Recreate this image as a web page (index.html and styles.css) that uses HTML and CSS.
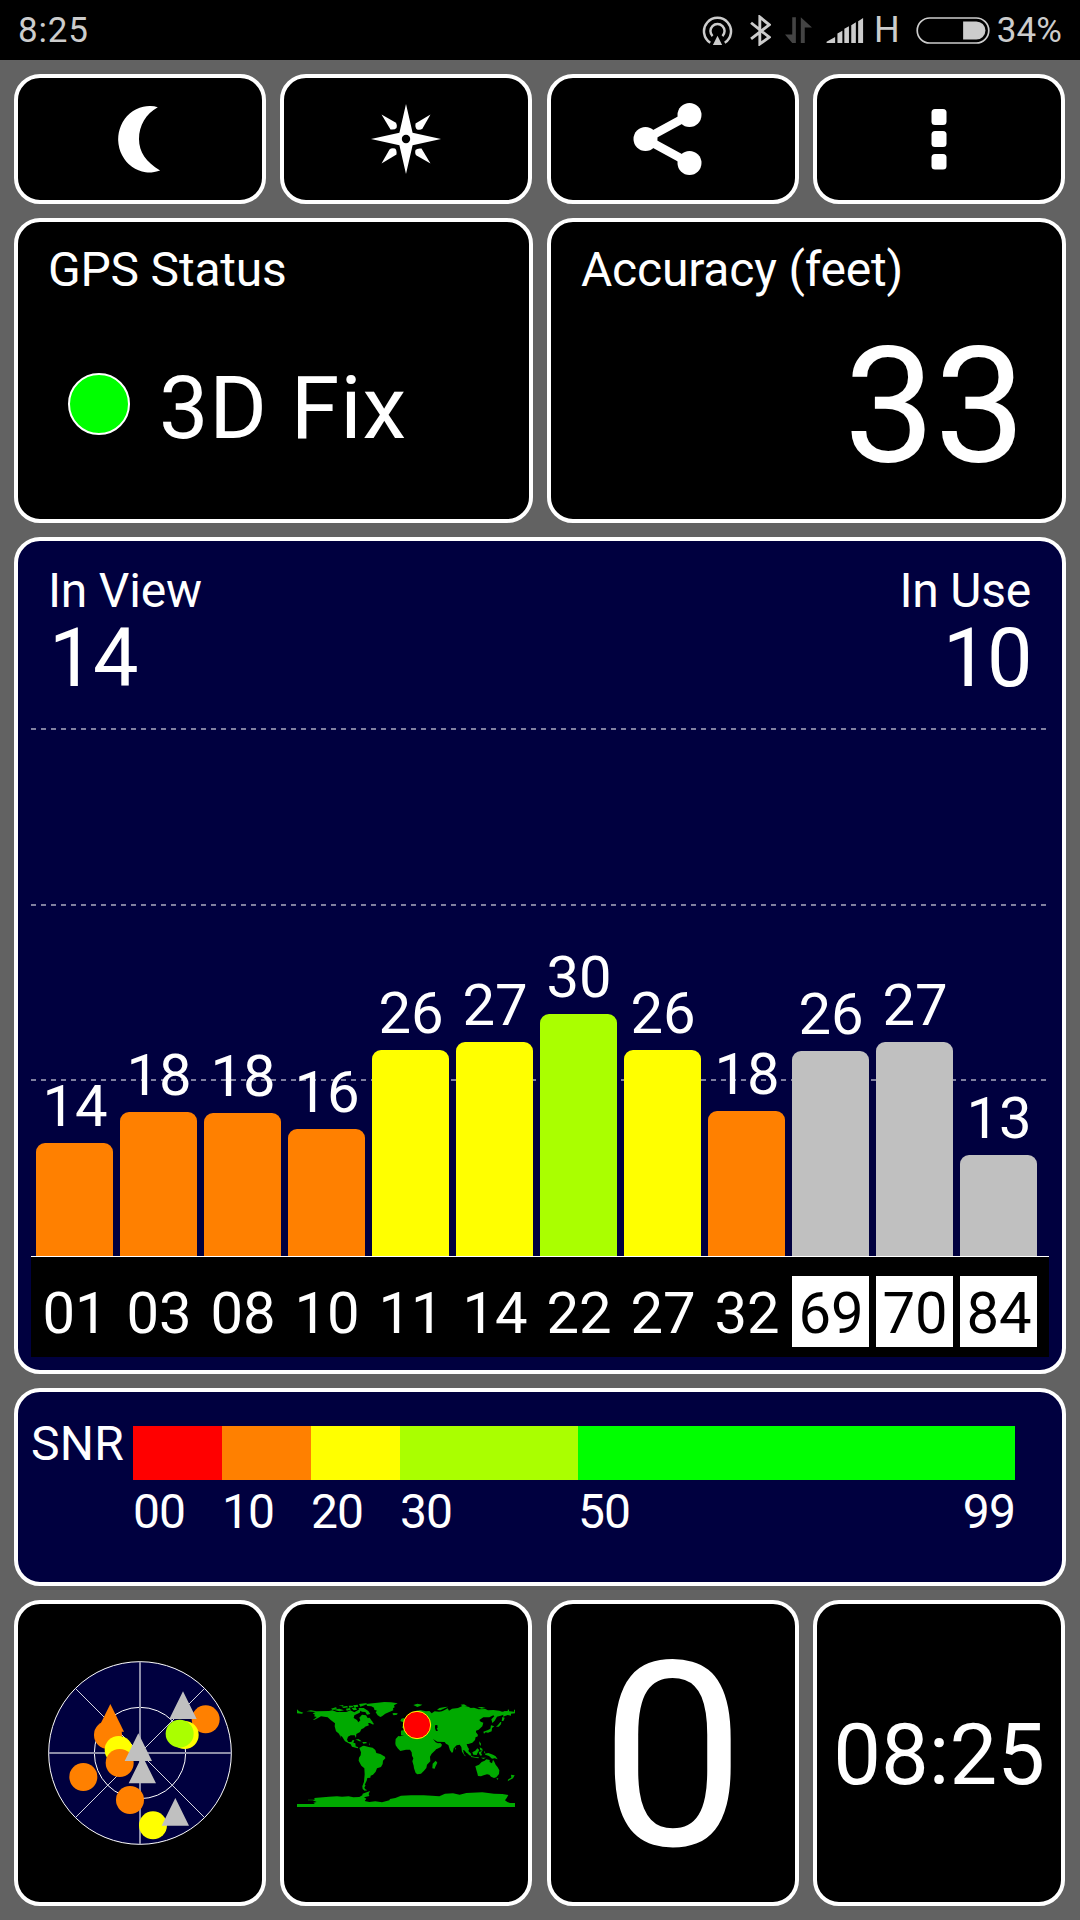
FILE: index.html
```
<!DOCTYPE html>
<html lang="en">
<head>
  <meta charset="UTF-8">
  <title>GPS Test</title>
  <link rel="stylesheet" href="styles.css">
</head>
<body>

  <div class="status-bar">
    <span class="clock">8:25</span>
    <div class="status-icons">
      <svg class="hotspot" viewBox="62 44 92 88">
        <g fill="none" stroke="#ccc" stroke-width="7.500">
          <path d="M86 125a41 41 0 1 1 44 0"/>
          <path d="M93 105a21.500 21.500 0 1 1 30 0"/>
        </g>
        <path d="M108 104l14 28H94z" fill="#ccc"/>
      </svg>
      <svg class="bluetooth" viewBox="206 43 62 92">
        <path d="M209 66l54 43-28 20V49l28 23-54 42" fill="none" stroke="#ccc" stroke-width="8.500"/>
      </svg>
      <svg class="arrows" viewBox="312 50 82 80">
        <path d="M334 50h11v78h-11l-22-26h22zM360 50l34 31h-22v47h-12z" fill="#444"/>
      </svg>
      <svg class="signal" viewBox="438 53 112 76">
        <path d="M438 129v-4l26-14v18zM471 129v-29l15-8v37zM492 129V86l14-8v51zM513 129V75l14-9v63zM534 129V63l15-10v76z" fill="#ccc"/>
      </svg>
      <span class="network">H</span>
      <svg class="battery" viewBox="707 50 218 80">
        <rect x="710" y="53" width="212" height="74" rx="37" fill="none" stroke="#ccc" stroke-width="5"/>
        <path d="M846 63h39a27 27 0 0 1 0 54h-39z" fill="#ccc"/>
      </svg>
      <span class="percent">34%</span>
    </div>
  </div>

  <div class="screen">
    <div class="row toolbar">
      <div class="card btn">
        <svg viewBox="0 0 80 80"><path d="M57.800 8.200A31.500 33.200 0 1 0 60.100 71.600C46 63 39 53 39 40C39 26 46 15 57.800 8.200Z"/></svg>
      </div>
      <div class="card btn">
        <svg viewBox="-40 -40 80 80">
          <path d="M0-35L6.600-6.300L35 0L6.600 6.300L0 35L-6.600 6.300L-35 0L-6.600-6.300Z"/>
          <path id="ray" d="M-24.500-24.500L-10.500-16.500Q-8.500-14.500-9.500-11Q-11-9-15.500-9.500Z"/>
          <use href="#ray" transform="rotate(90)"/>
          <use href="#ray" transform="rotate(180)"/>
          <use href="#ray" transform="rotate(270)"/>
          <circle r="4.200" fill="#000"/>
        </svg>
      </div>
      <div class="card btn">
        <svg viewBox="-40 -40 80 80">
          <path d="M16.500-24L-27.500 0L16.500 24" fill="none" stroke="#fff" stroke-width="8.500"/>
          <circle cx="-27.500" r="12"/>
          <circle cx="16.500" cy="-24" r="12"/>
          <circle cx="16.500" cy="24" r="12"/>
        </svg>
      </div>
      <div class="card btn">
        <svg viewBox="-40 -40 80 80">
          <rect x="-7.500" y="-30" width="15" height="16" rx="3.500"/>
          <rect x="-7.500" y="-8" width="15" height="16" rx="3.500"/>
          <rect x="-7.500" y="15" width="15" height="15.500" rx="3.500"/>
        </svg>
      </div>
    </div>

    <div class="row status">
      <div class="card">
        <div class="label">GPS Status</div>
        <div class="fix"><span class="dot"></span><span class="fix-text">3D Fix</span></div>
      </div>
      <div class="card">
        <div class="label">Accuracy (feet)</div>
        <div class="accuracy">33</div>
      </div>
    </div>

    <div class="card chart">
      <div class="counts">
        <div class="count">
          <div class="label">In View</div>
          <div class="num">14</div>
        </div>
        <div class="count right">
          <div class="label">In Use</div>
          <div class="num">10</div>
        </div>
      </div>
      <div class="plot">
        <div class="sat"><span>14</span><div class="bar orange" style="height:113px"></div></div>
        <div class="sat"><span>18</span><div class="bar orange" style="height:144px"></div></div>
        <div class="sat"><span>18</span><div class="bar orange" style="height:143px"></div></div>
        <div class="sat"><span>16</span><div class="bar orange" style="height:127px"></div></div>
        <div class="sat"><span>26</span><div class="bar yellow" style="height:206px"></div></div>
        <div class="sat"><span>27</span><div class="bar yellow" style="height:214px"></div></div>
        <div class="sat"><span>30</span><div class="bar lime" style="height:242px"></div></div>
        <div class="sat"><span>26</span><div class="bar yellow" style="height:206px"></div></div>
        <div class="sat"><span>18</span><div class="bar orange" style="height:145px"></div></div>
        <div class="sat"><span>26</span><div class="bar gray" style="height:205px"></div></div>
        <div class="sat"><span>27</span><div class="bar gray" style="height:214px"></div></div>
        <div class="sat"><span>13</span><div class="bar gray" style="height:101px"></div></div>
      </div>
      <div class="ids">
        <span>01</span>
        <span>03</span>
        <span>08</span>
        <span>10</span>
        <span>11</span>
        <span>14</span>
        <span>22</span>
        <span>27</span>
        <span>32</span>
        <span class="glonass">69</span>
        <span class="glonass">70</span>
        <span class="glonass">84</span>
      </div>
    </div>

    <div class="card snr">
      <div class="snr-label">SNR</div>
      <div class="scale">
        <div class="step s10"><div class="color red"></div>00</div>
        <div class="step s10"><div class="color orange"></div>10</div>
        <div class="step s10"><div class="color yellow"></div>20</div>
        <div class="step s20"><div class="color lime"></div>30</div>
        <div class="step s49"><div class="color green"></div><div class="ends"><span>50</span><span>99</span></div></div>
      </div>
    </div>

    <div class="row tiles">
      <div class="card tile">
        <svg class="radar" viewBox="84 93 552 552">
          <circle cx="360" cy="369" r="274" fill="#00003f" stroke="#fff" stroke-width="3"/>
          <circle cx="360" cy="369" r="137" fill="none" stroke="#fff" stroke-width="3"/>
          <path d="M360 95v548M86 369h548" stroke="#8c8ca8" stroke-width="6"/>
          <path d="M167 176l386 386M553 176L167 562" stroke="#fff" stroke-width="2.500"/>
          <g fill="#ff8000">
            <circle cx="557" cy="268" r="42"/>
            <circle cx="264" cy="315" r="42"/>
            <path d="M271 222l41 83h-82z"/>
            <circle cx="190" cy="441" r="42"/>
            <circle cx="330" cy="510" r="42"/>
          </g>
          <circle cx="296" cy="360" r="42" fill="#ff0"/>
          <circle cx="299" cy="399" r="42" fill="#ff8000"/>
          <circle cx="494" cy="315" r="42" fill="#ff0"/>
          <circle cx="479" cy="311" r="42" fill="#aaff00"/>
          <circle cx="399" cy="586" r="42" fill="#ff0"/>
          <path d="M489 184l41 83h-82zM367 377l41 83h-82zM355 310l41 83h-82zM466 504l41 83h-82z" fill="#c0c0c0"/>
        </svg>
      </div>
      <div class="card tile">
        <svg class="map" viewBox="48 54 660 330">
          <g fill="#00aa00">
            <!-- north america -->
            <path d="M51 88l6 6 13 4-4 3-15-1z"/>
            <path d="M79 94l14-3 16 3 38-1 10-2 14 5 28 0 12-5 12 6 13-8 6 2-3 7-16 8-2 8 10 6 4 7 6-6-3-8 8-9 12 2 5 8 6-1 6 9 4 5-15 3 3 6-12 4-3 4-8 4-4 8-11 6-1 12-4-8-12 0-8 4-3 9 4 7 9 0 4-6 5 1-3 7 6 2 1 9 8 3-2 3-17-5-4-7-17-9-8-13-6-5 3 10-7-15-9-7-4-15 1-9-12-9-10-9-20-3-9 5-12 6-3 0 11-9-8-2 3-5-7-4 9-4z"/>
            <path d="M160 89l18-3 14 5-13 3zM153 86l14-4 5 3-14 5zM185 80l16-2 4 4-14 2zM198 86l12-2 2 5-12 3zM176 77l15-2-3 4zM206 77l12 0 2 4-12 2zM215 85l12-3 4 7-10 2zM219 76l14-2 2 6-12 2zM237 72l24-3-4 5-16 6zM236 84l15 0 14 9 6 9-10 2-5-8-10-1-9-5zM265 127l8-4 8 7-1 4z"/>
            <path d="M258 72l20-2 15-2 20-2 20 1 20 3-11 6 2 6-5 3 1 6-14 6-10 4-10 8-5 2-8-5-6-9 4-5-8-3-1-6-8-4-12-1z"/>
            <path d="M337 101l4-2 12 1-2 4-10 2zM226 179l9-2 10 7-7 0-6-3zM247 186l10 0 5 3-12 2zM267 187l3 8-2 1z"/>
            <!-- south america -->
            <path d="M238 204l10-6 4-1 14 4 12 2 8 7 3 9 12 3 14 8 1 5-7 7-1 10-5 9-12 4-4 10-8 9-7 3-1 6-9 1-2 8-3 6-3 7 3 1-4 7 3 5 6 3-8 1-6-5-1-8 5-14 2-22-1-18-9-8-8-15 1-9 5-7 1-9z"/>
            <!-- europe and asia -->
            <path d="M363 166l0-14 9-2-1-4-6-5 9-5-4-9-9-4 3-7 8-2 4 10 9-4-1-8 8-9 16-10 12-3 18 4 10-1 7 7 9-6 13 1 9-1 8-4 9-5 4 7 9-6 18-2 13-6 18 2 7 4 10-1 14 5 20-1 8 4 16-1 18 2 8 3 17-2 1-6 3 4v9l-12-1 1 4-14 4-11 3-7 12-7 7-3-11 9-9-3-3-12 6-18 0-12 8 4 5 8 3-3 11-11 10-8 3 0 5 6 8-2 5-5 1-2 9-8 8-12 4-5 0 3 9 4 6-2 7-6 4-4-6-6-2 3 12 6 7-4-2-8-12-2-14-5-7-9 2-9 9-2 10-3 4-6-8-5-16-7-4-4-5-22-1-13-8 8 10 7 3 7-1 5 5-3 7-11 5-12 5-4-1-7-12-9-12-3-7z"/>
            <path d="M672 94l18 0 12 1v-6h3v11l-12 1 0 6-10-2-14 5z"/>
            <path d="M400 75l12-4 15 3-7 4-8 3zM471 90l7-6 17-3 9-1-13 6-10 5zM542 74l10-1 10 6-12 2zM592 82l14-1 11 3-12 2zM524 201l4 5-2 3z"/>
            <!-- africa -->
            <path d="M360 169l16-3 12-2 3 6 16 4 20 0 14 2 5 10 5 9 6 7 12-3 2 2-5 10-11 10-5 9 1 14-10 10-2 10-7 8-9 9-11 2-5-4-5-14-1-8-4-13 3-9-4-8-1-10-5-8-12 0-17 4-8-8-6-9-1-6 1-13 8-9z"/>
            <path d="M467 242l5 6-6 12-2 6-7-1 1-14z"/>
            <!-- islands -->
            <path d="M667 111l7 2-3 9-6 2zM661 126l3 0-1 7-7 7-8 0 6-5zM633 136l10 3-7 5-1 10-11 4-7-1-5 4-2-6 14-5 7-4zM598 184l5 7-1 7-4-6zM599 202l8 4 1 7-7-2zM552 204l7 3 14 14 1 7-6-2-10-10zM573 228l12 3 12 1-2 3-22-4zM577 217l9-5 6-7 6 5-5 8-3 7-10-1zM596 216l11-3-4 6 3 5-3 4-5-5zM612 213l4 4-3 3zM614 221l11-2 14 5 8 5 6 9-9-3-8 1-9-8-11-4zM603 233l15 0-8 4z"/>
            <path d="M586 259l11-5 8-8 9-4 5-4 10 2 0 6 7 4 3-11 4 6 4 9 6 8 5 9-1 11-8 10-7 2-9-4-5-6-7-1-10 3-8 3-9-1-2-8-3-10z"/>
            <path d="M649 295l6 0-2 5zM693 284l11 2-5 9-11 6-5 3 2-6 9-5z"/>
            <!-- antarctica -->
            <path d="M51 372L105 372L100 368L110 366L98 361L84 361L84 359L104 359L103 354L147 350L171 349L186 350L206 349L220 352L238 351L247 346L248 341L262 336L270 333L266 342L268 348L252 352L259 356L254 363L268 366L286 364L306 367L328 361L330 357L346 354L363 347L393 346L431 346L456 347L478 349L495 341L519 340L539 344L559 339L607 337L642 341L667 342L685 345L680 354L675 361L682 366L690 369L705 369V381H51Z"/>
          </g>
          <path d="M465 136l7-1 1 8-3 2 4 7-6 1-3-8z"/>
          <circle cx="411" cy="135" r="41" fill="#f00" stroke="#ff0" stroke-width="3"/>
        </svg>
      </div>
      <div class="card tile speed">0</div>
      <div class="card tile time">08:25</div>
    </div>
  </div>

</body>
</html>
```
FILE: styles.css
```
* {
  box-sizing: border-box;
}

body {
  margin: 0;
  width: 1080px;
  height: 1920px;
  overflow: hidden;
  background: #626262;
  color: white;
  font-family: Roboto, sans-serif;
}

.status-bar {
  display: flex;
  justify-content: space-between;
  height: 60px;
  padding: 0 18px 0 18px;
  background: black;
  color: #ccc;
  font-size: 35px;
  line-height: 61px;
}

.clock {
  letter-spacing: 0.8px;
}

.status-icons {
  display: flex;
  align-items: center;
}

.hotspot {
  width: 31px;
  height: 29px;
}

.bluetooth {
  width: 21px;
  height: 31px;
  margin-left: 17px;
}

.arrows {
  width: 27px;
  height: 27px;
  margin-left: 14px;
}

.signal {
  width: 38px;
  height: 25px;
  margin-left: 14px;
}

.network {
  margin-left: 10px;
  font-size: 36px;
}

.battery {
  width: 74px;
  height: 27px;
  margin: 0 7px 0 16px;
}

.percent {
  letter-spacing: 0.1px;
}

.screen {
  display: flex;
  flex-direction: column;
  gap: 14px;
  padding: 14px;
}

.row {
  display: flex;
  gap: 14px;
}

.card {
  border: 4px solid white;
  border-radius: 26px;
  background: black;
}

.row .card {
  flex: 1 1 0;
}

.toolbar,
.tiles {
  gap: 14.400px;
}

.toolbar .card,
.tiles .card {
  flex: 0 0 252px;
}

.toolbar {
  height: 130px;
}

.btn {
  display: flex;
  align-items: center;
  justify-content: center;
}

.btn svg {
  width: 80px;
  height: 80px;
  fill: white;
}

.label {
  font-size: 48px;
  line-height: 48px;
  letter-spacing: -0.2px;
}

/* status */
.status {
  height: 305px;
}

.status .card {
  padding: 24px 37px 0 30px;
}

.fix {
  display: flex;
  align-items: flex-start;
  padding: 70px 0 0 20px;
}

.dot {
  width: 62px;
  height: 62px;
  margin-top: 9px;
  border: 2px solid white;
  border-radius: 50%;
  background: #00ff00;
}

.fix-text {
  margin-left: 29px;
  font-size: 88px;
  line-height: 88px;
  letter-spacing: 0.9px;
}

.accuracy {
  margin-top: 31px;
  font-size: 162px;
  line-height: 162px;
  letter-spacing: -0.5px;
  text-align: right;
}

/* satellite chart */
.chart {
  height: 837px;
  padding: 0 13px;
  background: #00003f;
}

.counts {
  display: flex;
  justify-content: space-between;
  height: 187px;
  padding: 26px 18px 0 17px;
}

.right {
  text-align: right;
}

.num {
  margin-top: 3px;
  font-size: 81px;
  line-height: 81px;
  letter-spacing: -1.5px;
}

.count .num {
  padding-left: 1px;
}

/* three dashed grid lines */
.plot {
  display: flex;
  align-items: flex-end;
  gap: 7px;
  height: 529px;
  padding: 0 5px;
  border-bottom: 1px solid white;
  --dash: repeating-linear-gradient(to right, #80809f 0 5px, transparent 5px 10px);
  background-image: var(--dash), var(--dash), var(--dash);
  background-size: 1016px 2px;
  background-position: 0 0, 0 176px, 0 351px;
  background-repeat: no-repeat;
}

.sat {
  width: 77px;
  text-align: center;
  font-size: 58px;
  line-height: 58px;
}

.sat span {
  display: block;
  margin-bottom: 8px;
  padding-left: 1px;
}

.bar {
  border-radius: 9px 9px 0 0;
}

.red {
  background: #ff0000;
}

.orange {
  background: #ff8000;
}

.yellow {
  background: #ffff00;
}

.lime {
  background: #aaff00;
}

.green {
  background: #00ff00;
}

.gray {
  background: #c0c0c0;
}

.ids {
  display: flex;
  gap: 7px;
  height: 100px;
  padding: 19px 5px 0;
  background: black;
}

.ids span {
  width: 77px;
  height: 71px;
  padding-left: 1px;
  font-size: 58px;
  line-height: 75px;
  text-align: center;
}

.ids .glonass {
  background: white;
  color: black;
}

/* snr scale */
.snr {
  display: flex;
  height: 198px;
  padding: 34px 47px 0 13px;
  background: #00003f;
  font-size: 48px;
}

.snr-label {
  width: 102px;
  line-height: 48px;
  margin-top: -6px;
  letter-spacing: 0.3px;
}

.scale {
  display: flex;
  flex: 1;
  line-height: 64px;
  letter-spacing: -0.9px;
}

.color {
  height: 54px;
}

.s10 {
  width: 89px;
}

.s20 {
  width: 178px;
}

.s49 {
  flex: 1;
}

.ends {
  display: flex;
  justify-content: space-between;
}

/* bottom tiles */
.tiles {
  height: 306px;
}

.tile {
  display: flex;
  align-items: center;
  justify-content: center;
}

.radar {
  width: 184px;
  height: 184px;
}

.map {
  width: 220px;
  height: 110px;
}

.speed {
  padding-top: 8px;
  font-size: 258px;
  line-height: 258px;
}

.time {
  padding-top: 4px;
  font-size: 85px;
  line-height: 85px;
}
```
